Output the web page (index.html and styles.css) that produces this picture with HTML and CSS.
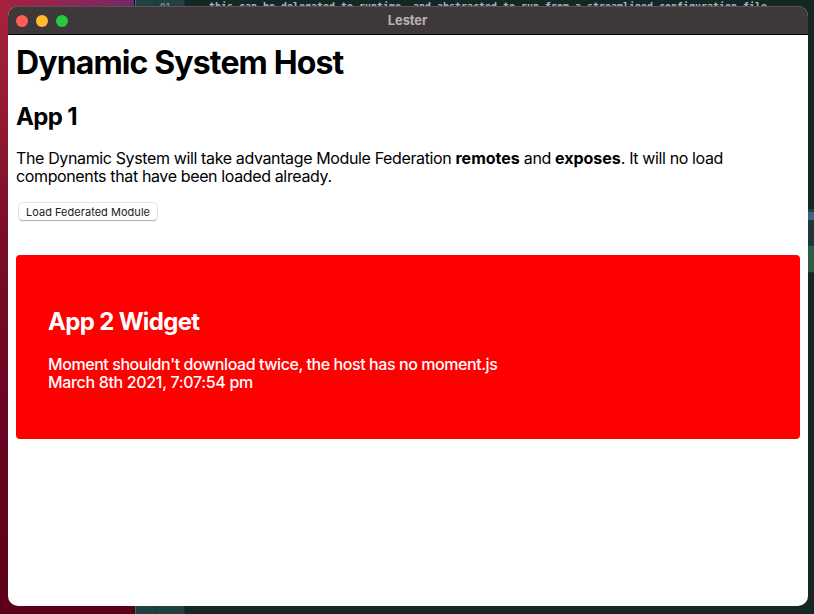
FILE: index.html
```html
<!DOCTYPE html>
<html lang="en">
<head>
<meta charset="utf-8">
<title>Lester</title>
<link rel="stylesheet" href="styles.css">
</head>
<body>
<div class="editor" aria-hidden="true">
  <div class="gutter"><span class="line-number">91</span></div>
  <div class="code">this can be delegated to runtime, and abstracted to run from a streamlined configuration file.</div>
  <div class="minimap"></div>
</div>
<div class="window">
  <header class="titlebar">
    <div class="lights"><i class="light close"></i><i class="light minimise"></i><i class="light expand"></i></div>
    <span class="title">Lester</span>
  </header>
  <main class="page">
    <h1>Dynamic System Host</h1>
    <h2 class="app-title">App 1</h2>
    <p class="intro">The Dynamic System will take advantage Module Federation <strong>remotes</strong> and <strong>exposes</strong>. It will no load<br>components that have been loaded already.</p>
    <button class="load" type="button">Load Federated Module</button>
    <section class="widget">
      <h2 class="widget-title">App 2 Widget</h2>
      <p class="moment">Moment shouldn't download twice, the host has no moment.js</p>
      <p class="date">March 8th 2021, 7:07:54 pm</p>
    </section>
  </main>
</div>
</body>
</html>
```
FILE: styles.css
```css
* { box-sizing: border-box; }
body {
  margin: 0;
  width: 814px;
  height: 614px;
  padding: 6px 6px 8px 8px;
  overflow: hidden;
  position: relative;
  font-family: Inter, "Liberation Sans", sans-serif;
  font-size: 16px;
  line-height: 18px;
  color: #000;
  background:
    linear-gradient(90deg, #a5213f 0, #84275c 100px, #702a64 134px) 0 0 / 134px 6px no-repeat,
    linear-gradient(#a72340 0, #951a32 110px, #7b0d2a 230px, #6b0523 390px, #5c0019 614px);
}
.editor {
  position: absolute;
  top: 0;
  left: 134px;
  width: 680px;
  height: 614px;
  display: flex;
  overflow: hidden;
  background: #142725;
  border-left: 1px solid #0a1414;
}
.gutter {
  width: 50px;
  flex: none;
  border-left: 1px solid #4b6a69;
  background: linear-gradient(90deg, #214141 0 20px, #173433 20px 21px, #214040 21px 48px, #103a3f 48px);
}
.line-number { display: block; margin: 0 0 0 24px; font: bold 9px/14px "DejaVu Sans Mono", monospace; color: #83918f; }
.code {
  flex: 1;
  padding-left: 24px;
  font: bold 10px/14px "DejaVu Sans Mono", monospace;
  letter-spacing: -0.02px;
  white-space: nowrap;
  color: #a4b4bd;
}
.minimap {
  width: 6px;
  flex: none;
  background: linear-gradient(#142725 0 209px, #1e4440 209px 212px, #416385 212px 220px, #193e3e 220px 223px, #1d3739 223px 246px, #2c5d45 246px 272px, #0c3440 272px 273px, #142725 273px);
}
.window {
  position: relative;
  height: 600px;
  border-radius: 10px;
  overflow: hidden;
  background: #fff;
}
.titlebar {
  height: 29px;
  display: grid;
  grid-template-columns: 1fr auto 1fr;
  align-items: center;
  padding: 0 9px 0 8px;
  background: #3f383a;
  border-top: 1px solid #5a5355;
  border-bottom: 1px solid #000;
}
.lights { display: flex; gap: 8px; }
.light { width: 12px; height: 12px; border-radius: 50%; }
.close { background: #ff5f57; }
.minimise { background: #febc2e; }
.expand { background: #28c840; }
.title { margin-bottom: 2px; font-size: 13px; line-height: 16px; font-weight: 700; letter-spacing: -0.1px; color: #b5b1b2; }
.page { padding: 8px; }
h1, h2, p { margin: 0; white-space: nowrap; }
h1 { padding-top: 1px; font-size: 32px; line-height: 38px; letter-spacing: -0.86px; }
h2 { font-size: 24px; line-height: 28px; letter-spacing: -0.67px; }
.app-title { margin-top: 21px; }
.intro { margin-top: 18px; letter-spacing: -0.37px; }
.intro strong { letter-spacing: -0.02px; }
.load {
  display: block;
  margin: 18px 0 0 3px;
  width: 138px;
  height: 17px;
  padding: 1px 0 0;
  border: 0;
  border-radius: 4px;
  background: #fff;
  box-shadow: 0 0 0 .5px #c9c9c9, 0 1px 1px #999;
  font: 11px/16px Inter, "Liberation Sans", sans-serif;
  letter-spacing: 0.03px;
  color: #202020;
}
.widget {
  height: 184px;
  margin-top: 35px;
  padding: 53px 32px 0;
  border-radius: 4px;
  background: #f00;
  color: #fff;
}
.moment { margin-top: 19px; font-weight: 450; letter-spacing: -0.43px; }
.date { font-weight: 450; letter-spacing: -0.33px; }
```
